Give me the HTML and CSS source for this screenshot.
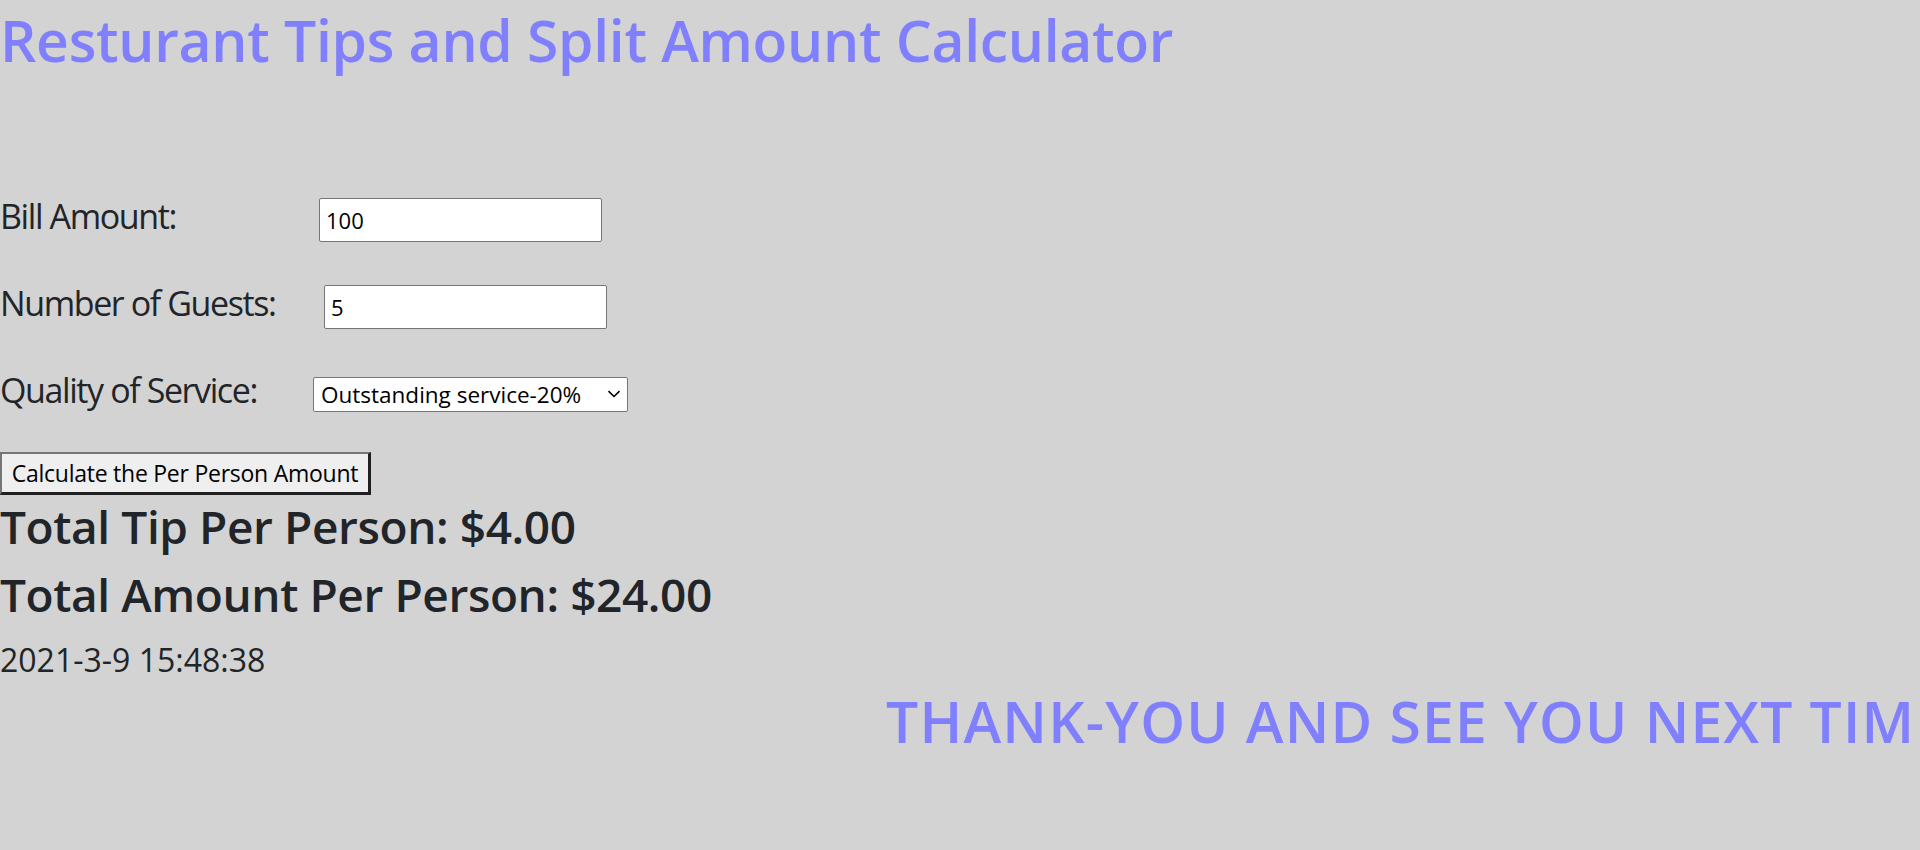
FILE: index.html
```html
<!DOCTYPE html>
<html lang="en">
<head>
<meta charset="utf-8">
<title>Resturant Tips and Split Amount Calculator</title>
<link rel="stylesheet" href="styles.css">
</head>
<body>
  <h1 class="title">Resturant Tips and Split Amount Calculator</h1>
  <form class="calc">
    <div class="row">
      <label class="label label-bill" for="bill">Bill Amount:</label>
      <input class="field" id="bill" type="text" value="100">
    </div>
    <div class="row">
      <label class="label label-guests" for="guests">Number of Guests:</label>
      <input class="field" id="guests" type="text" value="5">
    </div>
    <div class="row row-last">
      <label class="label label-service" for="service">Quality of Service:</label>
      <span class="select-wrap">
        <select class="choice" id="service">
          <option>Outstanding service-20%</option>
          <option>Good service-15%</option>
          <option>Ok service-10%</option>
          <option>Bad service-5%</option>
        </select>
        <svg class="chev" width="14" height="8" viewBox="0 0 14 8" aria-hidden="true"><polyline points="1.5,1.2 7,6.5 12.5,1.2" fill="none" stroke="#000" stroke-width="1.6"/></svg>
      </span>
    </div>
    <button class="calc-btn" type="button">Calculate the Per Person Amount</button>
  </form>
  <h2 class="result result-first">Total Tip Per Person: $4.00</h2>
  <h2 class="result">Total Amount Per Person: $24.00</h2>
  <p class="date">2021-3-9 15:48:38</p>
  <div class="marquee"><h1 class="marquee-text">THANK-YOU AND SEE YOU NEXT TIME</h1></div>
</body>
</html>
```
FILE: styles.css
```css
html, body {
  margin: 0;
  padding: 0;
}
body {
  background: #d3d3d3;
  color: #212529;
  font-family: "Open Sans", "Noto Sans", sans-serif;
  overflow: hidden;
}
.title {
  margin: 4px 0 0;
  font-size: 57px;
  font-weight: 600;
  letter-spacing: -0.3px;
  line-height: 72px;
  color: #8080ff;
  white-space: nowrap;
}
.calc {
  margin-top: 118px;
}
.row {
  display: flex;
  align-items: baseline;
  height: 44px;
  margin-bottom: 43px;
}
.row-last {
  margin-bottom: 40px;
}
.label {
  font-size: 34px;
  letter-spacing: -1.4px;
  line-height: 44px;
  white-space: nowrap;
}
.label-bill { width: 319px; }
.label-guests { width: 324px; }
.label-service { width: 313px; }
.field {
  box-sizing: border-box;
  width: 283px;
  height: 44px;
  border: 1px solid #767676;
  border-radius: 2px;
  background: #fff;
  padding: 0 6px;
  font-family: inherit;
  font-size: 22px;
  color: #000;
}
.select-wrap {
  position: relative;
  display: inline-block;
}
.choice {
  box-sizing: border-box;
  width: 315px;
  height: 35px;
  border: 1px solid #767676;
  border-radius: 2px;
  background: #fff;
  padding: 0 4px 0 7px;
  font-family: inherit;
  font-size: 22.5px;
  color: #000;
  appearance: none;
  -webkit-appearance: none;
}
.chev {
  position: absolute;
  right: 7px;
  top: 13px;
  pointer-events: none;
}
.calc-btn {
  display: block;
  box-sizing: border-box;
  width: 371px;
  height: 43px;
  padding: 0;
  margin-bottom: 3px;
  background: #efefef;
  border-style: solid;
  border-width: 2px 3px 3px 2px;
  border-color: #767676 #202020 #202020 #767676;
  font-family: inherit;
  font-size: 23px;
  letter-spacing: -0.25px;
  white-space: nowrap;
  color: #000;
}
.result {
  margin: 0 0 11px;
  font-size: 46px;
  font-weight: 600;
  letter-spacing: -0.4px;
  line-height: 57px;
  white-space: nowrap;
}
.date {
  margin: 14px 0 0;
  font-size: 32px;
  line-height: 45px;
}
.marquee {
  margin-top: 3px;
  overflow: hidden;
  white-space: nowrap;
  padding-left: 886px;
}
.marquee-text {
  margin: 0;
  font-size: 57px;
  font-weight: 600;
  letter-spacing: 1.2px;
  line-height: 72px;
  color: #8080ff;
}
```
